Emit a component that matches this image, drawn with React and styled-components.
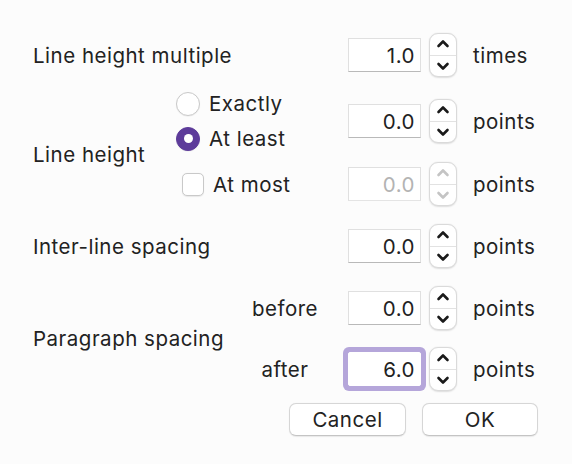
import React from 'react';
import styled, { createGlobalStyle } from 'styled-components';

const Global = createGlobalStyle`
  html, body {
    margin: 0;
    padding: 0;
    background: #fcfcfc;
  }
  body {
    font-family: Inter, "Liberation Sans", sans-serif;
    color: #222;
    font-size: 20.5px;
    letter-spacing: 0.5px;
  }
`;

const Dialog = styled.div`
  width: 572px;
  height: 464px;
  box-sizing: border-box;
  padding: 33px 0 0 33px;
  display: flex;
  flex-direction: column;
`;

const Section = styled.div`
  display: flex;
  align-items: center;
  margin-top: ${p => p.gap || 0}px;
`;

const Label = styled.div`
  width: ${p => p.w}px;
  flex: none;
  white-space: nowrap;
  margin-top: ${p => p.shift || 0}px;
`;

const Column = styled.div`
  display: flex;
  flex-direction: column;
  gap: ${p => p.gap || 0}px;
`;

const SubRow = styled.div`
  display: flex;
  align-items: center;
`;

const SubLabel = styled.div`
  width: ${p => p.w}px;
  flex: none;
  text-align: ${p => p.align || 'left'};
  margin-right: ${p => p.mr || 0}px;
`;

const Choices = styled.div`
  width: 172px;
  display: flex;
  flex-direction: column;
`;

const Choice = styled.label`
  height: 35px;
  display: flex;
  align-items: center;
  gap: 9px;
  padding-left: ${p => p.indent || 0}px;
  white-space: nowrap;
`;

const Radio = styled.span`
  width: 24px;
  height: 24px;
  box-sizing: border-box;
  border-radius: 50%;
  flex: none;
  display: flex;
  align-items: center;
  justify-content: center;
  background: ${p => (p.on ? '#5d3b9a' : '#fff')};
  border: 1px solid ${p => (p.on ? '#5d3b9a' : '#c9c9c9')};
  box-shadow: 0 0.5px 1px rgba(0, 0, 0, 0.08);
  &::after {
    content: '';
    display: ${p => (p.on ? 'block' : 'none')};
    width: 9px;
    height: 9px;
    border-radius: 50%;
    background: #fff;
  }
`;

const Check = styled.span`
  width: 22px;
  height: 23px;
  box-sizing: border-box;
  border-radius: 5px;
  flex: none;
  background: #fff;
  border: 1px solid #c9c9c9;
  box-shadow: 0 0.5px 1px rgba(0, 0, 0, 0.08);
`;

const Control = styled.div`
  display: flex;
  align-items: center;
`;

const Field = styled.div`
  width: 73px;
  height: 34px;
  box-sizing: border-box;
  background: #fff;
  border: 1px solid #e0e0e0;
  border-bottom-color: ${p => (p.disabled ? '#e4e4e4' : '#b9b9b9')};
  display: flex;
  align-items: center;
  justify-content: flex-end;
  padding-right: 5px;
  color: ${p => (p.disabled ? '#b3b3b3' : '#222')};
  ${p =>
    p.focused &&
    `
    border-radius: 2px;
    border-color: #fff;
    box-shadow: 0 0 0 5px #b5a6da;
  `}
`;

const Stepper = styled.div`
  width: 28px;
  height: 44px;
  box-sizing: border-box;
  margin-left: 8px;
  border-radius: 9px;
  background: #fff;
  border: 1px solid #dadada;
  box-shadow: 0 0.5px 1.5px rgba(0, 0, 0, 0.12);
  display: flex;
  flex-direction: column;
  color: ${p => (p.disabled ? '#c4c4c4' : '#1a1a1a')};
`;

const StepHalf = styled.div`
  flex: 1;
  display: flex;
  align-items: center;
  justify-content: center;
  & + & {
    border-top: 1px solid #e2e2e2;
  }
`;

const Unit = styled.div`
  margin-left: 16px;
`;

const Buttons = styled.div`
  display: flex;
  gap: 16px;
  margin-top: 12px;
  margin-left: 256px;
`;

const Button = styled.div`
  width: ${p => p.w}px;
  height: 33px;
  box-sizing: border-box;
  border-radius: 7px;
  background: #fff;
  border: 1px solid #d6d6d6;
  border-bottom-color: #c4c4c4;
  box-shadow: 0 0.5px 1px rgba(0, 0, 0, 0.08);
  display: flex;
  align-items: center;
  justify-content: center;
`;

function Chevron({ down }) {
  return (
    <svg width="14" height="10" viewBox="0 0 14 10">
      <path
        d={down ? 'M2.5 3 L7 7.5 L11.5 3' : 'M2.5 7 L7 2.5 L11.5 7'}
        fill="none"
        stroke="currentColor"
        strokeWidth="2.6"
        strokeLinecap="round"
        strokeLinejoin="round"
      />
    </svg>
  );
}

function NumberControl({ value, unit, disabled, focused }) {
  return (
    <Control>
      <Field disabled={disabled} focused={focused}>{value}</Field>
      <Stepper disabled={disabled}>
        <StepHalf><Chevron /></StepHalf>
        <StepHalf><Chevron down /></StepHalf>
      </Stepper>
      <Unit>{unit}</Unit>
    </Control>
  );
}

export default function App() {
  return (
    <>
      <Global />
      <Dialog>
        <Section>
          <Label w={315}>Line height multiple</Label>
          <NumberControl value="1.0" unit="times" />
        </Section>

        <Section gap={9}>
          <Label w={143} shift={17}>Line height</Label>
          <Column gap={6}>
            <SubRow>
              <Choices>
                <Choice><Radio />Exactly</Choice>
                <Choice><Radio on />At least</Choice>
              </Choices>
              <NumberControl value="0.0" unit="points" />
            </SubRow>
            <SubRow>
              <Choices>
                <Choice indent={6}><Check />At most</Choice>
              </Choices>
              <NumberControl value="0.0" unit="points" disabled />
            </SubRow>
          </Column>
        </Section>

        <Section gap={18}>
          <Label w={315}>Inter-line spacing</Label>
          <NumberControl value="0.0" unit="points" />
        </Section>

        <Section gap={18}>
          <Label w={207}>Paragraph spacing</Label>
          <Column gap={17}>
            <SubRow>
              <SubLabel w={90} align="center" mr={18}>before</SubLabel>
              <NumberControl value="0.0" unit="points" />
            </SubRow>
            <SubRow>
              <SubLabel w={90} align="center" mr={18}>after</SubLabel>
              <NumberControl value="6.0" unit="points" focused />
            </SubRow>
          </Column>
        </Section>

        <Buttons>
          <Button w={117}>Cancel</Button>
          <Button w={116}>OK</Button>
        </Buttons>
      </Dialog>
    </>
  );
}
